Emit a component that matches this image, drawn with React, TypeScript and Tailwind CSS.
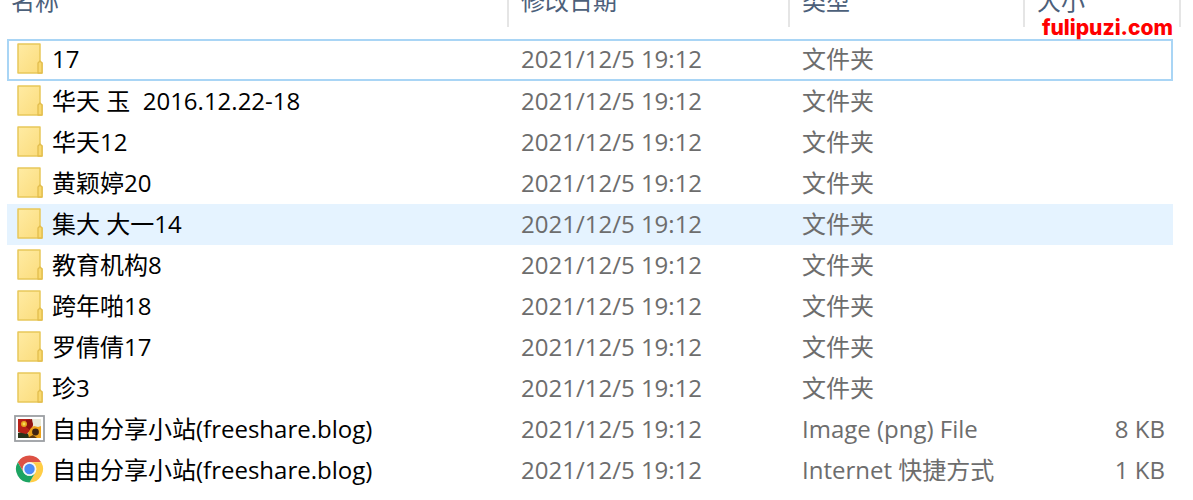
import { clsx } from "clsx";

type FileKind = "folder" | "image" | "chrome";

interface FileRow {
  name: string;
  kind: FileKind;
  type: string;
  size?: string;
  state?: "focused" | "hovered";
}

const MODIFIED = "2021/12/5 19:12";

const files: FileRow[] = [
  { name: "17", kind: "folder", type: "文件夹", state: "focused" },
  { name: "华天 玉  2016.12.22-18", kind: "folder", type: "文件夹" },
  { name: "华天12", kind: "folder", type: "文件夹" },
  { name: "黄颖婷20", kind: "folder", type: "文件夹" },
  { name: "集大 大一14", kind: "folder", type: "文件夹", state: "hovered" },
  { name: "教育机构8", kind: "folder", type: "文件夹" },
  { name: "跨年啪18", kind: "folder", type: "文件夹" },
  { name: "罗倩倩17", kind: "folder", type: "文件夹" },
  { name: "珍3", kind: "folder", type: "文件夹" },
  { name: "自由分享小站(freeshare.blog)", kind: "image", type: "Image (png) File", size: "8 KB" },
  { name: "自由分享小站(freeshare.blog)", kind: "chrome", type: "Internet 快捷方式", size: "1 KB" },
];

function FolderIcon() {
  return (
    <svg viewBox="0 0 32 32" className="w-8 h-8 shrink-0" aria-hidden="true">
      <defs>
        <linearGradient id="folder" x1="0" y1="0" x2="1" y2="1">
          <stop offset="0" stopColor="#ffeba3" />
          <stop offset="1" stopColor="#fbdc7b" />
        </linearGradient>
      </defs>
      <path d="M4 1h22v18l2 1v10H4z" fill="url(#folder)" stroke="#e8c75a" strokeWidth="1.5" strokeLinejoin="round" />
      <path d="M24 30V20l2-2 2 2v10z" fill="#f9d970" stroke="#e2bd4d" strokeWidth="1.3" strokeLinejoin="round" />
    </svg>
  );
}

function ImageIcon() {
  return (
    <svg viewBox="0 0 32 32" className="w-8 h-8 shrink-0" aria-hidden="true">
      <rect x="1" y="3" width="29" height="25" fill="#fff" stroke="#9c9fa3" strokeWidth="1.8" />
      <rect x="4" y="6" width="23" height="19" fill="#e9e8d6" />
      <path d="M4 20l7-2 7 7H4z" fill="#27331a" />
      <path d="M4 6h12l3 5-1 6-6 4-8-2z" fill="#b82219" />
      <path d="M12 7l6-1 1 6-3 5-4-3z" fill="#8f1410" />
      <circle cx="10" cy="11" r="3" fill="#e8a51c" />
      <circle cx="10" cy="11" r="1.4" fill="#f7df57" />
      <path d="M17 15l3-2 4 1 3-1v12H15l-1-5z" fill="#eda21a" />
      <circle cx="21.500" cy="19" r="3.400" fill="#402311" />
      <path d="M15 24l4-2 4 3h-8z" fill="#5d3911" />
    </svg>
  );
}

function ChromeIcon() {
  return (
    <svg viewBox="0 0 32 32" className="w-8 h-8 shrink-0" aria-hidden="true">
      <circle cx="15.500" cy="15" r="13.500" fill="#fff" />
      <path d="M3.800 8.250A13.500 13.500 0 0 1 27.200 8.250H15.500A6.750 6.750 0 0 0 9.650 18.380z" fill="#dd5144" />
      <path d="M27.200 8.250A13.500 13.500 0 0 1 15.500 28.500L21.350 18.380A6.750 6.750 0 0 0 15.500 8.250z" fill="#ffcd46" />
      <path d="M15.500 28.500A13.500 13.500 0 0 1 3.800 8.250L9.650 18.380A6.750 6.750 0 0 0 21.350 18.380z" fill="#1da462" />
      <circle cx="15.500" cy="15" r="6.750" fill="#f4f7f4" />
      <circle cx="15.500" cy="15" r="5.200" fill="#4c8bf5" />
    </svg>
  );
}

const icons = { folder: FolderIcon, image: ImageIcon, chrome: ChromeIcon };

function HeaderCell({ label, className, colSpan }: { label: string; className: string; colSpan?: number }) {
  return (
    <th scope="col" colSpan={colSpan} className="p-0 font-normal">
      <button type="button" className={clsx("block w-full h-[50px] pb-[2px] text-left text-[#4c607a] border-r-2 border-[#e5e5e5]", className)}>
        {label}
      </button>
    </th>
  );
}

function Row({ file }: { file: FileRow }) {
  const Icon = icons[file.kind];
  const focused = file.state === "focused";
  const cell = clsx(
    "pt-0 pb-[2px]",
    focused ? "h-[42px] border-y-2 border-[#a9d5f5]" : "h-[41px]",
    file.state === "hovered" && "bg-[#e5f3ff]"
  );

  return (
    <tr>
      <td className={clsx(cell, "text-black", focused ? "border-l-2 pl-[5px]" : "pl-[7px]")}>
        <div className="flex items-center gap-[6px]">
          <Icon />
          <span className="whitespace-pre">{file.name}</span>
        </div>
      </td>
      <td className={clsx(cell, "pl-3")}>{MODIFIED}</td>
      <td className={clsx(cell, "pl-3")}>{file.type}</td>
      <td className={clsx(cell, "pr-2 text-right", focused && "border-r-2")}>{file.size}</td>
      <td className="p-0" />
    </tr>
  );
}

export default function App() {
  return (
    <main className="relative w-full min-h-screen overflow-hidden bg-white pl-[7px] pr-3 font-['Open_Sans','Noto_Sans_CJK_SC',sans-serif] text-[24px] leading-8 text-[#6d6d6d]">
      {/* The column header is scrolled half out of the window */}
      <table className="-mt-[23px] w-full table-fixed border-separate border-spacing-0 whitespace-nowrap">
        <colgroup>
          <col />
          <col className="w-[281px]" />
          <col className="w-[235px]" />
          <col className="w-[148px]" />
          <col className="w-[8px]" />
        </colgroup>
        <thead>
          <tr>
            <HeaderCell label="名称" className="pl-1" />
            <HeaderCell label="修改日期" className="pl-3" />
            <HeaderCell label="类型" className="pl-3" />
            <HeaderCell label="大小" className="pl-3" colSpan={2} />
          </tr>
          <tr aria-hidden="true">
            <td colSpan={5} className="h-3 p-0" />
          </tr>
        </thead>
        <tbody>
          {files.map((file, i) => (
            <Row key={i} file={file} />
          ))}
        </tbody>
      </table>

      {/* Site watermark */}
      <a href="#" className="absolute top-4 right-5 font-['Inter',sans-serif] text-[21px] leading-6 font-extrabold text-[#ff0000]">
        fulipuzi.com
      </a>
    </main>
  );
}
